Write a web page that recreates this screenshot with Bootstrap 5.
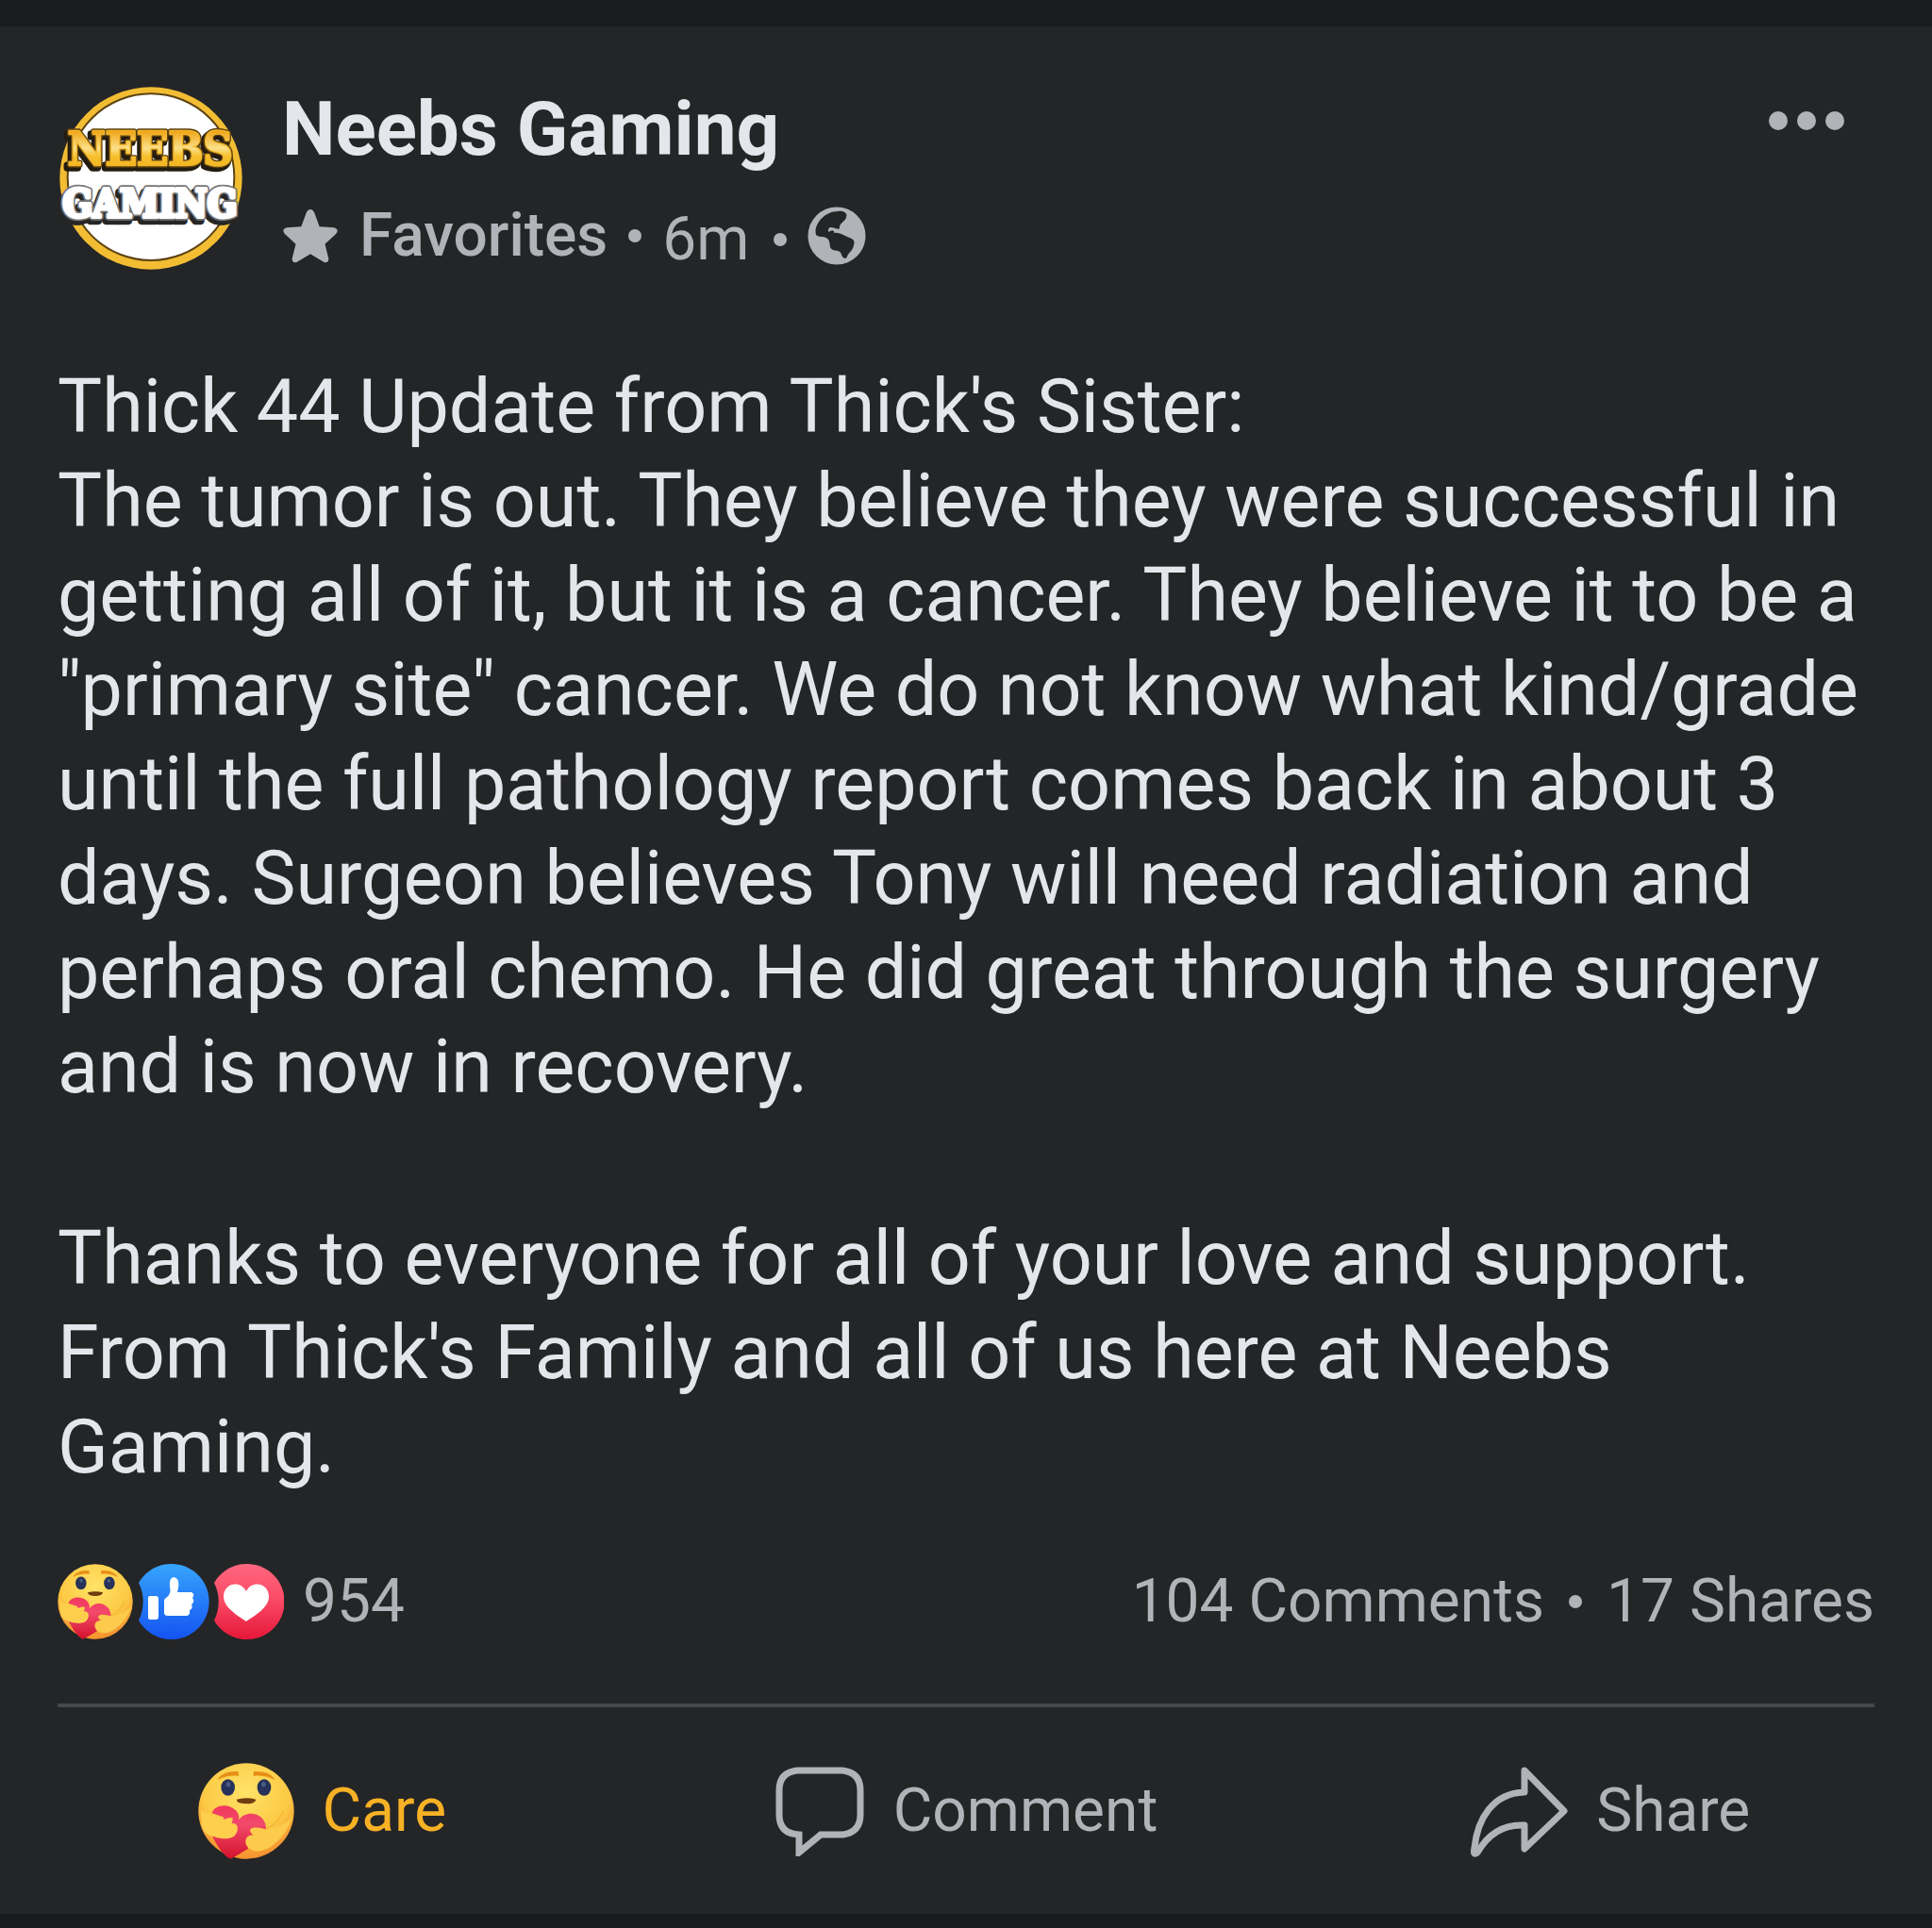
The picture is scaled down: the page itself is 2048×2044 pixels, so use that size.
<!DOCTYPE html>
<html lang="en">
<head>
<meta charset="utf-8">
<meta name="viewport" content="width=device-width, initial-scale=1">
<title>Neebs Gaming</title>
<link href="https://cdn.jsdelivr.net/npm/bootstrap@5.3.0/dist/css/bootstrap.min.css" rel="stylesheet">
<style>
  body { background: #1a1b1c; font-family: Roboto, "Liberation Sans", sans-serif; color: #e4e6eb; }
  .post { background: #242527; margin: 28px 0 16px; padding-top: 62px; }
  .post-inner { padding: 0 61px; }
  .post svg { display: block; flex: none; }
  .muted { color: #b0b3b8; }
  .post-head { gap: 40px; }
  .author { font-size: 80px; line-height: 94px; font-weight: 700; color: inherit; }
  .meta-row { gap: 22px; height: 76px; margin-top: 28px; font-size: 64px; line-height: 76px; }
  .fav { font-weight: 500; }
  .dot { width: 14px; height: 14px; border-radius: 50%; background: #b0b3b8; flex: none; }
  .dotted { gap: 26px; }
  .more-btn { margin: 24px 30px 0 0; }
  .post-text { margin-top: 93px; font-size: 79px; line-height: 100px; }
  .post-text p { margin-bottom: 103px; }
  .post-text p:last-child { margin-bottom: 0; }
  .counts { margin-top: 74px; height: 80px; font-size: 64px; line-height: 80px; }
  .reacts { margin-right: 20px; }
  .rule { height: 4px; margin: 68px 0 0; background: #47484a; border: 0; opacity: 1; }
  .acts { height: 219px; }
  .act { font-size: 64px; line-height: 80px; gap: 30px; padding: 0; }
  .care { color: #f7b125; }
</style>
</head>
<body>
<svg width="0" height="0" class="position-absolute" aria-hidden="true">
  <defs>
    <radialGradient id="face" cx=".5" cy=".3" r=".75"><stop offset="0" stop-color="#ffe368"/><stop offset=".6" stop-color="#fcc944"/><stop offset="1" stop-color="#f2812b"/></radialGradient>
    <linearGradient id="hug" x1="0" y1="0" x2="0" y2="1"><stop offset="0" stop-color="#f0385c"/><stop offset=".35" stop-color="#f34a6c"/><stop offset="1" stop-color="#d3122c"/></linearGradient>
    <linearGradient id="blue" x1="0" y1="0" x2="0" y2="1"><stop offset="0" stop-color="#36a5fd"/><stop offset="1" stop-color="#1453f2"/></linearGradient>
    <linearGradient id="red" x1="0" y1="0" x2="0" y2="1"><stop offset="0" stop-color="#ff6680"/><stop offset=".45" stop-color="#fb4d68"/><stop offset="1" stop-color="#e61739"/></linearGradient>
    <linearGradient id="gold" x1="0" y1="0" x2="0" y2="1"><stop offset=".2" stop-color="#f0a81c"/><stop offset=".5" stop-color="#fbe08a"/><stop offset=".65" stop-color="#f6c02c"/><stop offset="1" stop-color="#f0ad1a"/></linearGradient>
    <clipPath id="faceclip"><circle cx="153" cy="153" r="153"/></clipPath>
    <symbol id="care" viewBox="0 0 306 306">
      <circle cx="153" cy="153" r="152" fill="url(#face)"/>
      <path d="M65 48Q83 24 128 27L129 41Q91 38 65 53ZM241 48Q223 24 177 27L176 41Q215 38 241 53Z" fill="#e78e17"/>
      <ellipse cx="95" cy="78" rx="22" ry="26" fill="#26325a"/><ellipse cx="210" cy="78" rx="22" ry="26" fill="#26325a"/>
      <ellipse cx="96" cy="68" rx="7" ry="8" fill="#495b83"/><ellipse cx="208" cy="68" rx="7" ry="8" fill="#495b83"/>
      <path d="M122 116Q153 108 184 116Q182 130 153 130Q124 130 122 116Z" fill="#713c10"/>
      <g clip-path="url(#faceclip)"><path d="M245 205Q262 250 200 285Q180 305 130 306L105 290Q180 280 245 205Z" fill="#f79a30" opacity=".6"/></g>
      <path d="M44 160C50 134 94 126 119 150C128 158 131 172 130 181C142 162 171 154 193 168C211 179 217 196 216 211C206 218 190 222 178 240L158 274L104 305C86 302 60 266 42 226L88 212L80 172Z" fill="url(#hug)"/>
      <path d="M8 150Q35 163 69 178C80 184 91 175 103 174C116 174 108 184 107 192C127 190 130 211 121 225C111 244 80 243 56 236C35 231 18 224 12 200Z" fill="#fdcf4d"/>
      <path d="M302 165Q282 202 216 211C198 207 179 202 167 210C161 217 171 225 176 230C157 228 146 243 153 260C162 282 196 288 227 269Q280 235 302 165Z" fill="#fdcb4b"/>
      <path d="M272 153Q253 194 216 211" fill="none" stroke="#eda932" stroke-width="5" opacity=".55"/>
    </symbol>
  </defs>
</svg>

<article class="post">
  <div class="post-inner">
    <header class="post-head d-flex align-items-start">
      <a href="#" aria-label="Neebs Gaming page">
        <svg width="198" height="198" viewBox="63 60 594 594">
          <circle cx="360" cy="357" r="290" fill="#f2bd33"/>
          <circle cx="360" cy="353" r="265" fill="#fff" stroke="#5c4312" stroke-width="6"/>
          <g font-family="'DejaVu Serif Condensed','DejaVu Serif',serif" font-weight="700" text-anchor="middle" stroke-linejoin="round" paint-order="stroke">
            <g font-size="146">
              <text x="351" y="324" fill="#241b10" stroke="#241b10" stroke-width="22">NEEBS</text>
              <text x="358" y="314" fill="#f3b52a" stroke="#5b400f" stroke-width="16">NEEBS</text>
              <text x="358" y="314" fill="url(#gold)" stroke="#f3b52a" stroke-width="8">NEEBS</text>
            </g>
            <g font-size="124">
              <text x="350" y="492" fill="#262626" stroke="#262626" stroke-width="26">GAMING</text>
              <text x="357" y="481" fill="#8b8b8b" stroke="#777" stroke-width="22">GAMING</text>
              <text x="357" y="481" fill="#fff" stroke="#fff" stroke-width="12">GAMING</text>
            </g>
          </g>
        </svg>
      </a>
      <div class="flex-grow-1">
        <a href="#" class="author d-block text-decoration-none">Neebs Gaming</a>
        <div class="meta-row muted d-flex align-items-center">
          <svg width="60" height="62" viewBox="0 0 62 62"><path d="M31 2Q34 2 35.500 6L41 21L57 22Q63 24 59 29L47 40L51 56Q51 61 46 60L31 51L16 60Q11 61 11 56L15 40L3 29Q-1 24 5 22L21 21L26.500 6Q28 2 31 2Z" fill="#b0b3b8"/></svg>
          <span class="fav">Favorites</span>
          <span class="dot"></span>
          <div class="dotted d-flex align-items-center pt-2">
            <span>6m</span><span class="dot"></span>
          </div>
          <svg width="62" height="62" viewBox="0 0 62 62" role="img" aria-label="Public"><circle cx="31" cy="31" r="30.500" fill="#b0b3b8"/><path d="M9 30C6 19 18 5 32 5C38 4 43 7 41 11C41 15 34 17 34 22C34 26 30 22 24 22C22 23 21 26 23 27C25 25 29 25 28 28C34 27 37 30 42 32C47 34 51 35 49 41C48 47 43 49 42 53C40 57 37 54 36 51C35 46 30 47 27 46C22 44 25 39 22 35C18 30 14 34 9 30Z" fill="#242527"/></svg>
        </div>
      </div>
      <button type="button" class="more-btn btn p-0 border-0" aria-label="More options">
        <svg width="84" height="28" viewBox="0 0 84 28" fill="#b0b3b8"><circle cx="12" cy="14" r="10"/><circle cx="42" cy="14" r="10"/><circle cx="72" cy="14" r="10"/></svg>
      </button>
    </header>

    <div class="post-text">
      <p>Thick 44 Update from Thick's Sister:<br>The tumor is out. They believe they were successful in<br>getting all of it, but it is a cancer. They believe it to be a<br>"primary site" cancer. We do not know what kind/grade<br>until the full pathology report comes back in about 3<br>days. Surgeon believes Tony will need radiation and<br>perhaps oral chemo. He did great through the surgery<br>and is now in recovery.</p>
      <p>Thanks to everyone for all of your love and support.<br>From Thick's Family and all of us here at Neebs<br>Gaming.</p>
    </div>

    <div class="counts muted d-flex align-items-center">
      <div class="reacts d-flex">
        <svg width="240" height="80" viewBox="0 0 240 80" role="img" aria-label="Care, Like and Love">
          <use href="#care" width="80" height="80"/>
          <path d="M86 20A40 40 0 1 1 86 60A45 45 0 0 0 86 20Z" fill="url(#blue)"/>
          <path d="M96 36Q96 34 98 34H104Q107 34 107 37V56Q107 59 104 59H98Q96 59 96 57ZM113 39Q113 37 115 36Q121 32 119 24Q118 15 123 14Q131 15 127 30H142Q146 32 143 36Q146 40 142 43Q144 47 140 49Q141 55 136 55H117Q113 55 113 52Z" fill="#fff"/>
          <path d="M166 20A40 40 0 1 1 166 60A45 45 0 0 0 166 20Z" fill="url(#red)"/>
          <path d="M200 61C191 55 176 46 176 35C176 20 194 17 200 29C206 17 224 20 224 35C224 46 209 55 200 61Z" fill="#fff"/>
        </svg>
      </div>
      <span>954</span>
      <div class="dotted ms-auto d-flex align-items-center">
        <a href="#" class="muted text-decoration-none">104 Comments</a><span class="dot"></span><a href="#" class="muted text-decoration-none">17 Shares</a>
      </div>
    </div>
    <hr class="rule">
  </div>

  <div class="acts row g-0 align-items-center">
    <div class="col d-flex justify-content-center">
      <button type="button" class="act care btn border-0 d-flex align-items-center"><svg width="102" height="102"><use href="#care" width="102" height="102"/></svg>Care</button>
    </div>
    <div class="col d-flex justify-content-center">
      <button type="button" class="act muted btn border-0 d-flex align-items-center"><svg width="96" height="96" viewBox="0 0 96 96"><path d="M24 5H72Q91 7 91 26V52Q91 70 73 73H49L26 92V73Q5 72 5 52V26Q5 7 24 5Z" fill="none" stroke="#b0b3b8" stroke-width="7"/></svg>Comment</button>
    </div>
    <div class="col d-flex justify-content-center">
      <button type="button" class="act muted btn border-0 d-flex align-items-center"><svg width="104" height="98" viewBox="0 0 104 98"><path d="M58 6L100 49L58 89V64Q26 62 8 93Q3 97 5 88C8 58 24 30 58 29Z" fill="none" stroke="#b0b3b8" stroke-width="7" stroke-linejoin="round"/></svg>Share</button>
    </div>
  </div>
</article>
<script src="https://cdn.jsdelivr.net/npm/bootstrap@5.3.0/dist/js/bootstrap.bundle.min.js"></script>
</body>
</html>
